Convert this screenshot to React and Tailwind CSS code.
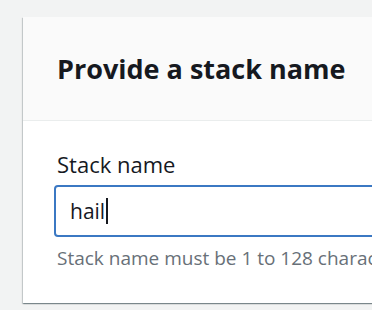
export default function App() {
  return (
    <div className="w-[372px] h-[310px] overflow-hidden bg-[#f2f3f3] pt-[17px] pl-[23px]" style={{ fontFamily: '"Open Sans", "Noto Sans", sans-serif' }}>
      <div className="w-[420px] h-[286px] bg-white shadow-[0_1px_1px_0_rgba(0,28,36,0.3),1px_1px_1px_0_rgba(0,28,36,0.15),-1px_1px_1px_0_rgba(0,28,36,0.15)]">
        <div className="h-[104px] bg-[#fafafa] border-b border-[#eaeded] flex items-center pl-[34px]">
          <h2 className="text-[27px] font-bold text-[#16191f] leading-none whitespace-nowrap">Provide a stack name</h2>
        </div>
        <div className="pl-[31px] pt-[28px]">
          <div className="pl-[3px] text-[22px] text-[#16191f] leading-[30px] whitespace-nowrap">Stack name</div>
          <div className="mt-[6px] h-[52px] rounded-[4px] border-2 border-[#3b78c3] flex items-center pl-[14px]">
            <span className="text-[21px] text-[#16191f] leading-none">hail</span>
            <span className="ml-[1px] w-[2px] h-[26px] bg-[#16191f]"></span>
          </div>
          <div className="pl-[3px] mt-[8px] text-[19px] text-[#687078] leading-[26px] whitespace-nowrap">Stack name must be 1 to 128 characters</div>
        </div>
      </div>
    </div>
  );
}
